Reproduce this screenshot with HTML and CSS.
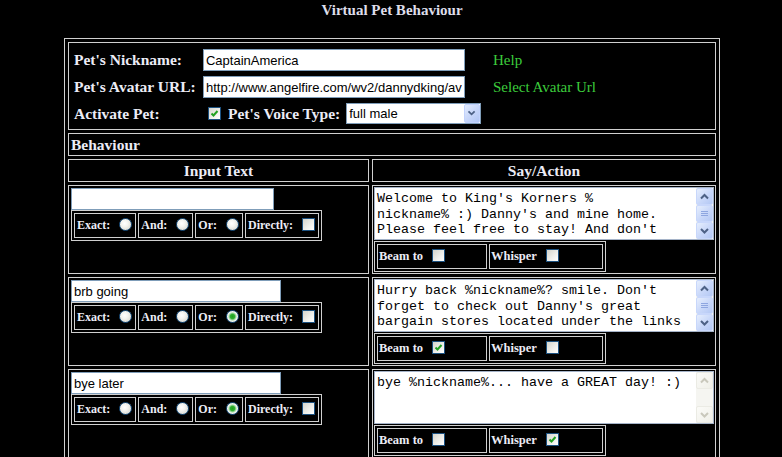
FILE: index.html
```html
<!DOCTYPE html>
<html lang="en">
<head>
<meta charset="utf-8">
<title>Virtual Pet Behaviour</title>
<link rel="stylesheet" href="styles.css">
</head>
<body>
<h1 class="title">Virtual Pet Behaviour</h1>
<table class="main">
  <colgroup><col class="col-in"><col class="col-out"></colgroup>
  <tr>
    <td colspan="2" class="cell settings">
      <div class="settings-grid">
        <span class="lbl">Pet's Nickname:</span>
        <input class="field" type="text" value="CaptainAmerica">
        <a class="link" href="#">Help</a>
        <span class="lbl">Pet's Avatar URL:</span>
        <input class="field" type="text" value="http://www.angelfire.com/wv2/dannydking/avatar.gif">
        <a class="link" href="#">Select Avatar Url</a>
        <span class="lbl">Activate Pet:</span>
        <div class="voice-row">
          <span class="cb on"><svg viewBox="0 0 11 11" width="11" height="11"><polyline points="2.5,5.5 4.5,7.5 8.5,3" fill="none" stroke="#21a121" stroke-width="2"/></svg></span>
          <span class="lbl voice-lbl">Pet's Voice Type:</span>
          <span class="selectwrap">
            <select class="select"><option>full male</option></select>
            <span class="drop"><svg viewBox="0 0 16 19" width="14" height="17"><polyline points="4,7 7.5,10.5 11,7" fill="none" stroke="#4d6185" stroke-width="2"/></svg></span>
          </span>
        </div>
      </div>
    </td>
  </tr>
  <tr><td colspan="2" class="cell section">Behaviour</td></tr>
  <tr><th class="cell colhead">Input Text</th><th class="cell colhead">Say/Action</th></tr>

  <tr>
    <td class="cell incell">
      <input class="trigger short" type="text" value="">
      <table class="opts"><tr>
        <td>Exact: <input class="rd" type="radio" name="m1"></td>
        <td>And: <input class="rd" type="radio" name="m1"></td>
        <td>Or: <input class="rd" type="radio" name="m1"></td>
        <td>Directly: <span class="cb"></span></td>
      </tr></table>
    </td>
    <td class="cell outcell">
      <div class="tawrap">
        <textarea class="say">Welcome to King's Korners %
nickname% :) Danny's and mine home. Please feel free to stay! And don't forget to sign our guestbook before you go!</textarea>
        <div class="vscroll">
          <div class="sb-btn"><svg viewBox="0 0 15 15" width="15" height="15"><polyline points="4,9.5 7.5,6 11,9.5" fill="none" stroke="#4d6185" stroke-width="2"/></svg></div>
          <div class="sb-btn sb-thumb"><svg viewBox="0 0 15 15" width="15" height="15"><path d="M4 5.5h7M4 7.5h7M4 9.5h7" stroke="#8ea6e0" stroke-width="1"/></svg></div>
          <div class="sb-btn"><svg viewBox="0 0 15 15" width="15" height="15"><polyline points="4,6 7.5,9.5 11,6" fill="none" stroke="#4d6185" stroke-width="2"/></svg></div>
        </div>
      </div>
      <table class="flags"><tr>
        <td class="beam">Beam to <span class="cb"></span></td>
        <td class="whisper">Whisper <span class="cb"></span></td>
      </tr></table>
    </td>
  </tr>

  <tr>
    <td class="cell incell">
      <input class="trigger long" type="text" value="brb going">
      <table class="opts"><tr>
        <td>Exact: <input class="rd" type="radio" name="m2"></td>
        <td>And: <input class="rd" type="radio" name="m2"></td>
        <td>Or: <input class="rd" type="radio" name="m2" checked></td>
        <td>Directly: <span class="cb"></span></td>
      </tr></table>
    </td>
    <td class="cell outcell">
      <div class="tawrap">
        <textarea class="say">Hurry back %nickname%? smile. Don't forget to check out Danny's great bargain stores located under the links on the left side of the page!</textarea>
        <div class="vscroll">
          <div class="sb-btn"><svg viewBox="0 0 15 15" width="15" height="15"><polyline points="4,9.5 7.5,6 11,9.5" fill="none" stroke="#4d6185" stroke-width="2"/></svg></div>
          <div class="sb-btn sb-thumb"><svg viewBox="0 0 15 15" width="15" height="15"><path d="M4 5.5h7M4 7.5h7M4 9.5h7" stroke="#8ea6e0" stroke-width="1"/></svg></div>
          <div class="sb-btn"><svg viewBox="0 0 15 15" width="15" height="15"><polyline points="4,6 7.5,9.5 11,6" fill="none" stroke="#4d6185" stroke-width="2"/></svg></div>
        </div>
      </div>
      <table class="flags"><tr>
        <td class="beam">Beam to <span class="cb on"><svg viewBox="0 0 11 11" width="11" height="11"><polyline points="2.5,5.5 4.5,7.5 8.5,3" fill="none" stroke="#21a121" stroke-width="2"/></svg></span></td>
        <td class="whisper">Whisper <span class="cb"></span></td>
      </tr></table>
    </td>
  </tr>

  <tr>
    <td class="cell incell">
      <input class="trigger long" type="text" value="bye later">
      <table class="opts"><tr>
        <td>Exact: <input class="rd" type="radio" name="m3"></td>
        <td>And: <input class="rd" type="radio" name="m3"></td>
        <td>Or: <input class="rd" type="radio" name="m3" checked></td>
        <td>Directly: <span class="cb"></span></td>
      </tr></table>
    </td>
    <td class="cell outcell">
      <div class="tawrap">
        <textarea class="say">bye %nickname%... have a GREAT day! :)</textarea>
        <div class="vscroll off">
          <div class="sb-btn"><svg viewBox="0 0 15 15" width="15" height="15"><polyline points="4,9.5 7.5,6 11,9.5" fill="none" stroke="#c9c8bc" stroke-width="2"/></svg></div>
          <div class="sb-track"></div>
          <div class="sb-btn"><svg viewBox="0 0 15 15" width="15" height="15"><polyline points="4,6 7.5,9.5 11,6" fill="none" stroke="#c9c8bc" stroke-width="2"/></svg></div>
        </div>
      </div>
      <table class="flags"><tr>
        <td class="beam">Beam to <span class="cb"></span></td>
        <td class="whisper">Whisper <span class="cb on"><svg viewBox="0 0 11 11" width="11" height="11"><polyline points="2.5,5.5 4.5,7.5 8.5,3" fill="none" stroke="#21a121" stroke-width="2"/></svg></span></td>
      </tr></table>
    </td>
  </tr>
</table>
</body>
</html>
```

FILE: styles.css
```css
* { box-sizing: border-box; }

html {
  background: #000;
  overflow: hidden;
}

body {
  margin: 0 7px 0 9px;
  background: #000;
  color: #ececf6;
  font-family: "Liberation Serif", "Times New Roman", serif;
}

.title {
  margin: 0;
  height: 38px;
  padding-top: 2px;
  text-align: center;
  font-size: 15px;
  line-height: 16px;
  font-weight: bold;
  color: #dedeea;
}

.main {
  width: 656px;
  margin: 0 auto;
  border: 1px solid #d0d0d0;
  border-spacing: 3px;
  table-layout: fixed;
}

.col-in { width: 301px; }
.col-out { width: 344px; }

.cell {
  border: 1px solid #d0d0d0;
  padding: 0;
  vertical-align: top;
}

/* settings block */
.settings { padding: 6px 5px 5px; }

.settings-grid {
  display: grid;
  grid-template-columns: 129px 262px 1fr;
  row-gap: 5px;
  align-items: center;
}

.lbl {
  font-size: 15.5px;
  font-weight: bold;
  white-space: nowrap;
}

.field {
  width: 262px;
  height: 22px;
  margin: 0;
  padding: 1px 2px;
  border: 1px solid #7f9db9;
  background: #fff;
  color: #000;
  font: 13px "Liberation Sans", Arial, sans-serif;
}

.link {
  margin-left: 28px;
  color: #3ccc3c;
  font-size: 15px;
  text-decoration: none;
}

.voice-row {
  grid-column: 2 / 4;
  display: flex;
  align-items: center;
}

.voice-row .cb { margin-left: 5px; }
.voice-lbl { margin-left: 7px; }

.selectwrap {
  position: relative;
  display: inline-block;
  margin-left: 6px;
  width: 135px;
  height: 21px;
}

.select {
  appearance: none;
  -webkit-appearance: none;
  display: block;
  width: 135px;
  height: 21px;
  margin: 0;
  padding: 0 2px;
  border: 1px solid #7f9db9;
  border-radius: 0;
  background: #fff;
  color: #000;
  font: 13px "Liberation Sans", Arial, sans-serif;
}

.drop {
  position: absolute;
  top: 1px;
  right: 1px;
  width: 16px;
  height: 19px;
  display: flex;
  align-items: center;
  justify-content: center;
  border: 1px solid #c3d3fd;
  border-radius: 2px;
  background: linear-gradient(135deg, #e4ecfd 0%, #c6d5f9 55%, #b1c6f5 100%);
}

/* section rows */
.section {
  height: 23px;
  padding: 0 2px;
  font-size: 15.5px;
  font-weight: bold;
  line-height: 20px;
  vertical-align: middle;
}

.colhead {
  height: 23px;
  font-size: 15.5px;
  font-weight: bold;
  line-height: 20px;
  text-align: center;
  vertical-align: middle;
}

/* behaviour rows */
.incell { padding: 2px; }
.outcell { padding: 1px; }

.trigger {
  display: block;
  height: 22px;
  margin: 0;
  padding: 1px 2px;
  border: 1px solid #7f9db9;
  background: #fff;
  color: #000;
  font: 13px "Liberation Sans", Arial, sans-serif;
}
.short { width: 203px; }
.long { width: 210px; }

.opts,
.flags {
  border: 1px solid #d0d0d0;
  border-spacing: 2px;
}

.opts td,
.flags td {
  height: 25px;
  border: 1px solid #d0d0d0;
  padding: 0 3px 0 2px;
  font-size: 12px;
  font-weight: bold;
  white-space: nowrap;
  vertical-align: middle;
}

.flags { margin-top: 1px; }
.flags td { padding: 0 1px; font-size: 12.5px; }
.flags .beam { width: 110px; }
.flags .whisper { width: 114px; }

.rd {
  appearance: none;
  -webkit-appearance: none;
  width: 13px;
  height: 13px;
  margin: 0 0 0 6px;
  vertical-align: -2px;
  border: 1px solid #1c5180;
  border-radius: 50%;
  background: radial-gradient(circle at 42% 40%, #ffffff 0%, #f4f4f0 35%, #cfcfc6 100%);
}

.rd:checked {
  background: radial-gradient(circle at 50% 50%, #1f9e1f 0, #2fae2f 2.2px, #9ad89a 3.4px, #f4f4f0 4.6px, #cfcfc6 100%);
}

.cb {
  display: inline-block;
  width: 13px;
  height: 13px;
  margin-left: 6px;
  vertical-align: -2px;
  border: 1px solid #1c5180;
  background: linear-gradient(135deg, #d4d4cc 0%, #f0f0ec 60%, #ffffff 100%);
}

.cb svg { display: block; }

.tawrap {
  position: relative;
  height: 53px;
}

.say {
  display: block;
  width: 100%;
  height: 53px;
  margin: 0;
  padding: 3px 19px 2px 2px;
  border: 1px solid #a5b3c8;
  background: #fff;
  color: #000;
  font: 13.333px "Liberation Mono", "Courier New", monospace;
  line-height: 15.7px;
  resize: none;
  overflow: hidden;
}

.vscroll {
  position: absolute;
  top: 1px;
  right: 1px;
  bottom: 1px;
  width: 17px;
  display: flex;
  flex-direction: column;
  background: #f5f5f1;
}

.sb-btn {
  flex: none;
  height: 17px;
  display: flex;
  align-items: center;
  justify-content: center;
  border: 1px solid #c8d7fb;
  border-radius: 2px;
  background: linear-gradient(135deg, #e6eefd 0%, #c8d7f9 55%, #b4c8f4 100%);
}

.sb-thumb { flex: 1; }

.sb-track { flex: 1; }

.off .sb-btn {
  border-color: #ebebe4;
  background: linear-gradient(135deg, #fbfbf8 0%, #efefe8 100%);
}
```
